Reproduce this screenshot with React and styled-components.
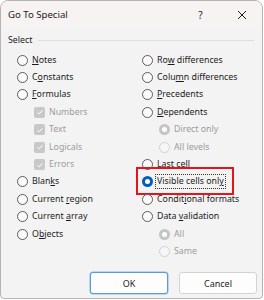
import React from "react";
import styled, { createGlobalStyle, css } from "styled-components";

const GlobalStyle = createGlobalStyle`
  html, body {
    margin: 0;
    padding: 0;
    background: #ffffff;
  }
  body {
    font-family: "Noto Sans", "Open Sans", sans-serif;
    color: #1b1b1b;
  }
`;

const leftItems = [
  { kind: "radio", label: "Notes", u: 0 },
  { kind: "radio", label: "Constants", u: 1 },
  { kind: "radio", label: "Formulas", u: 0 },
  { kind: "check", label: "Numbers", sub: true },
  { kind: "check", label: "Text", sub: true },
  { kind: "check", label: "Logicals", sub: true },
  { kind: "check", label: "Errors", sub: true },
  { kind: "radio", label: "Blanks", u: 4 },
  { kind: "radio", label: "Current region", u: 8 },
  { kind: "radio", label: "Current array", u: 8 },
  { kind: "radio", label: "Objects", u: 1 },
];

const rightItems = [
  { kind: "radio", label: "Row differences", u: 2 },
  { kind: "radio", label: "Column differences", u: 4 },
  { kind: "radio", label: "Precedents", u: 0 },
  { kind: "radio", label: "Dependents", u: 0 },
  { kind: "radio", label: "Direct only", sub: true, state: "disabledOn" },
  { kind: "radio", label: "All levels", sub: true, state: "disabledOff" },
  { kind: "radio", label: "Last cell", u: 2 },
  { kind: "radio", label: "Visible cells only", u: 17, state: "on", focus: true },
  { kind: "radio", label: "Conditional formats", u: 6 },
  { kind: "radio", label: "Data validation", u: 5 },
  { kind: "radio", label: "All", sub: true, state: "disabledOn" },
  { kind: "radio", label: "Same", sub: true, state: "disabledOff" },
];

function Label({ text, u }) {
  if (u === undefined) return text;
  return (
    <>
      {text.slice(0, u)}
      <u>{text[u]}</u>
      {text.slice(u + 1)}
    </>
  );
}

function Item({ item }) {
  return (
    <Row $sub={item.sub}>
      {item.kind === "radio" ? (
        <Radio $state={item.state || "off"} />
      ) : (
        <CheckBox>
          <svg width="8" height="8" viewBox="0 0 8 8">
            <path d="M1.4 4.2 L3.2 5.9 L6.6 2.2" fill="none" stroke="#fff" strokeWidth="1" />
          </svg>
        </CheckBox>
      )}
      <Text $disabled={item.sub} $focus={item.focus}>
        <Label text={item.label} u={item.u} />
      </Text>
      {item.focus && <Highlight />}
    </Row>
  );
}

export default function App() {
  return (
    <>
      <GlobalStyle />
      <Dialog>
        <TitleBar>
          <Title>Go To Special</Title>
          <TitleButtons>
            <TitleBtn>?</TitleBtn>
            <TitleBtn>
              <svg width="10" height="10" viewBox="0 0 10 10">
                <path d="M1 1 L9 9 M9 1 L1 9" stroke="#1b1b1b" strokeWidth="1" />
              </svg>
            </TitleBtn>
          </TitleButtons>
        </TitleBar>
        <Body>
          <GroupHead>
            <span>Select</span>
            <Rule />
          </GroupHead>
          <Columns>
            <Column>
              {leftItems.map((it) => (
                <Item key={it.label} item={it} />
              ))}
            </Column>
            <Column>
              {rightItems.map((it, i) => (
                <Item key={i} item={it} />
              ))}
            </Column>
          </Columns>
          <Footer>
            <Button $primary>OK</Button>
            <Button>Cancel</Button>
          </Footer>
        </Body>
      </Dialog>
    </>
  );
}

const Dialog = styled.div`
  box-sizing: border-box;
  width: 263px;
  height: 299px;
  border: 1px solid #b4b4b4;
  border-radius: 8px 8px 4px 4px;
  overflow: hidden;
  background: #f3f3f3;
  display: grid;
  grid-template-rows: 27px 1fr;
`;

const TitleBar = styled.div`
  display: flex;
  align-items: center;
  justify-content: space-between;
  background: #f7f3f2;
  padding-left: 7px;
`;

const Title = styled.div`
  font-size: 9.6px;
  color: #1b1b1b;
`;

const TitleButtons = styled.div`
  display: flex;
  align-items: center;
`;

const TitleBtn = styled.div`
  width: 41px;
  height: 27px;
  display: flex;
  align-items: center;
  justify-content: center;
  font-size: 10px;
  color: #1b1b1b;
`;

const Body = styled.div`
  display: grid;
  grid-template-rows: 16px auto 1fr;
  row-gap: 3.5px;
  padding: 4px 5px 4px 7px;
  font-size: 8.8px;
`;

const GroupHead = styled.div`
  display: flex;
  align-items: center;
  gap: 6px;
  font-size: 8.8px;
`;

const Rule = styled.div`
  flex: 1;
  height: 1px;
  background: #dedede;
  margin-right: 3px;
`;

const Columns = styled.div`
  display: grid;
  grid-template-columns: 125px 1fr;
  padding-left: 9px;
`;

const Column = styled.div`
  display: flex;
  flex-direction: column;
`;

const Row = styled.div`
  position: relative;
  height: 17.4px;
  display: flex;
  align-items: center;
  padding-left: ${(p) => (p.$sub ? "17px" : "0")};
`;

const dot = css`
  &::after {
    content: "";
    position: absolute;
    left: 3px;
    top: 3px;
    width: 5px;
    height: 5px;
    border-radius: 50%;
    background: #fff;
  }
`;

const Radio = styled.span`
  box-sizing: border-box;
  width: 11px;
  height: 11px;
  border-radius: 50%;
  flex: none;
  margin-right: 4px;
  position: relative;
  ${(p) =>
    p.$state === "off" &&
    css`
      border: 1px solid #5b5b5b;
      background: #fbfbfb;
    `}
  ${(p) =>
    p.$state === "on" &&
    css`
      background: #005fb8;
      ${dot}
    `}
  ${(p) =>
    p.$state === "disabledOn" &&
    css`
      background: #c5c5c5;
      ${dot}
    `}
  ${(p) =>
    p.$state === "disabledOff" &&
    css`
      border: 1px solid #d2d2d2;
      background: #f6f6f6;
    `}
`;

const CheckBox = styled.span`
  box-sizing: border-box;
  width: 11px;
  height: 11px;
  border-radius: 2px;
  background: #c8c8c8;
  flex: none;
  margin-right: 4px;
  display: flex;
  align-items: center;
  justify-content: center;
`;

const Text = styled.span`
  white-space: nowrap;
  line-height: 13px;
  color: ${(p) => (p.$disabled ? "#9b9b9b" : "#1b1b1b")};
  ${(p) =>
    p.$focus &&
    css`
      outline: 1px dotted #333;
      padding: 0 1px;
      margin-left: -1px;
    `}
  u {
    text-decoration-thickness: 1px;
    text-underline-offset: 1px;
  }
`;

const Highlight = styled.div`
  position: absolute;
  left: -6px;
  top: -6px;
  width: 98px;
  height: 28px;
  box-sizing: border-box;
  border: 2px solid #e3141b;
  pointer-events: none;
`;

const Footer = styled.div`
  align-self: end;
  display: flex;
  justify-content: flex-end;
  gap: 11px;
`;

const Button = styled.div`
  box-sizing: border-box;
  width: 78px;
  height: 22px;
  display: flex;
  align-items: center;
  justify-content: center;
  font-size: 9px;
  background: #fdfdfd;
  border-radius: 3px;
  border: 1px solid ${(p) => (p.$primary ? "#5d9bd8" : "#d3d3d3")};
  box-shadow: ${(p) => (p.$primary ? "0 0 0 0.5px #8cb8e4" : "none")};
`;
